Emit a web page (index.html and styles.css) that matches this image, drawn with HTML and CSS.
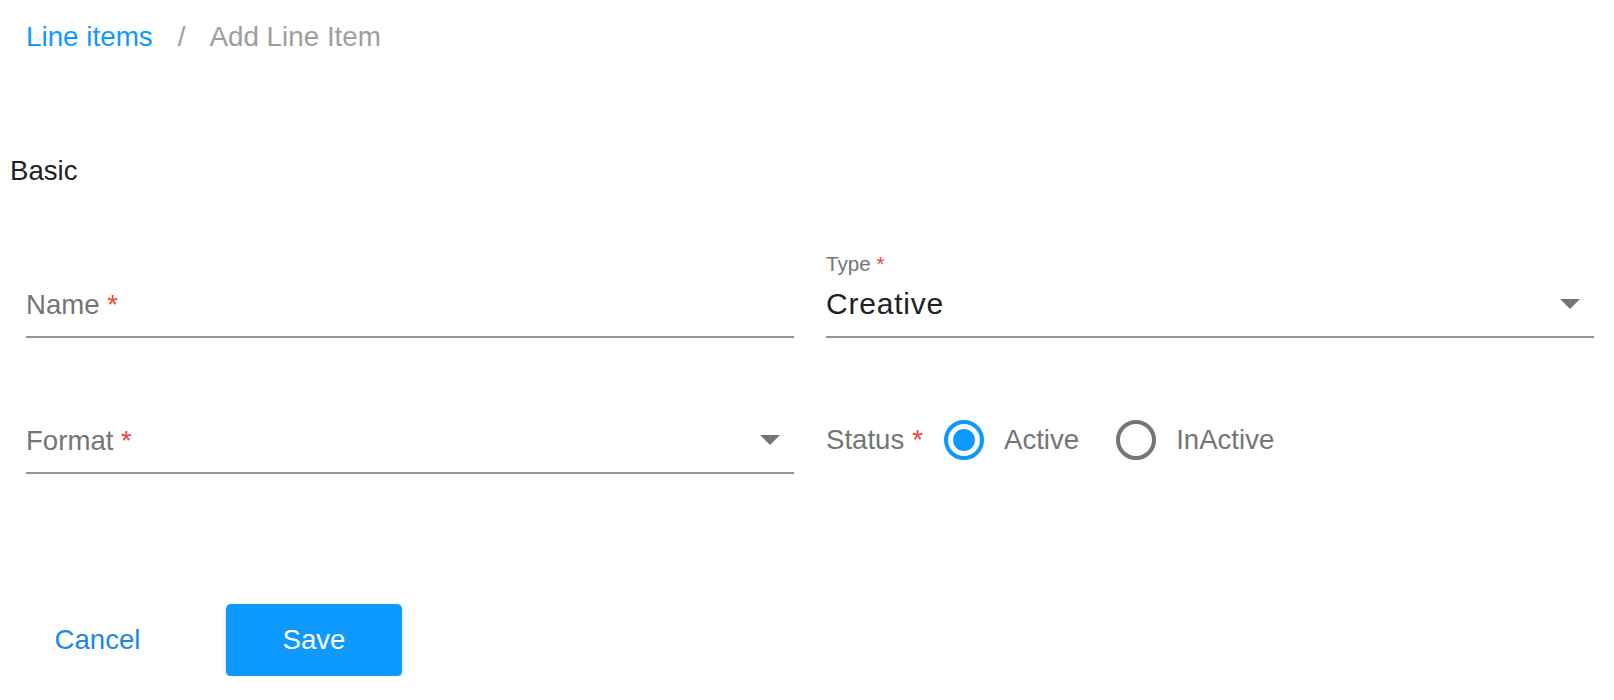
FILE: index.html
```html
<!DOCTYPE html>
<html lang="en">
<head>
<meta charset="utf-8">
<title>Add Line Item</title>
<link rel="stylesheet" href="styles.css">
</head>
<body>
<div class="page">
  <nav class="crumbs">
    <a class="crumb-link" href="#">Line items</a>
    <span class="crumb-sep">/</span>
    <span class="crumb-current">Add Line Item</span>
  </nav>

  <h2 class="section-title">Basic</h2>

  <div class="form-grid">
    <div class="field">
      <div class="field-label"></div>
      <div class="field-input">
        <span class="placeholder">Name <span class="req">*</span></span>
      </div>
      <div class="underline"></div>
    </div>

    <div class="field">
      <div class="field-label">Type <span class="req">*</span></div>
      <div class="field-input select">
        <span class="value">Creative</span>
        <svg class="arrow" width="20" height="10" viewBox="0 0 20 10"><polygon points="0,0 20,0 10,10"/></svg>
      </div>
      <div class="underline"></div>
    </div>

    <div class="field">
      <div class="field-label"></div>
      <div class="field-input select">
        <span class="placeholder">Format <span class="req">*</span></span>
        <svg class="arrow" width="20" height="10" viewBox="0 0 20 10"><polygon points="0,0 20,0 10,10"/></svg>
      </div>
      <div class="underline"></div>
    </div>

    <div class="field">
      <div class="field-label"></div>
      <div class="field-input radio-row">
        <span class="radio-legend">Status<span class="req req-status">*</span></span>
        <label class="radio-option">
          <svg class="radio checked" width="48" height="48" viewBox="0 0 24 24"><circle cx="12" cy="12" r="9" fill="none" stroke-width="2"/><circle class="dot" cx="12" cy="12" r="5"/></svg>
          <span class="radio-text">Active</span>
        </label>
        <label class="radio-option second">
          <svg class="radio" width="48" height="48" viewBox="0 0 24 24"><circle cx="12" cy="12" r="9" fill="none" stroke-width="2"/></svg>
          <span class="radio-text">InActive</span>
        </label>
      </div>
    </div>
  </div>

  <div class="actions">
    <button class="btn-text" type="button">Cancel</button>
    <button class="btn-primary" type="button">Save</button>
  </div>
</div>
</body>
</html>
```

FILE: styles.css
```css
html, body {
  margin: 0;
  padding: 0;
  background: #ffffff;
}

body {
  font-family: "Liberation Sans", Arial, Helvetica, sans-serif;
  color: #212121;
}

.page {
  padding-top: 17px;
}

/* Breadcrumbs */
.crumbs {
  display: flex;
  align-items: center;
  height: 40px;
  line-height: 40px;
  font-size: 27.8px;
  padding-left: 26px;
}

.crumb-link {
  color: #1199fb;
  text-decoration: none;
}

.crumb-sep {
  color: #9e9e9e;
  margin: 0 24px 0 25px;
}

.crumb-current {
  color: #9e9e9e;
}

/* Section title */
.section-title {
  margin: 94px 0 0 0;
  padding-left: 10px;
  height: 40px;
  line-height: 40px;
  font-size: 27.6px;
  font-weight: normal;
  color: #212121;
}

/* Form grid */
.form-grid {
  margin-top: 61px;
  padding: 0 20px 0 26px;
  display: grid;
  grid-template-columns: 1fr 1fr;
  column-gap: 32px;
  row-gap: 50px;
}

.field {
  display: flex;
  flex-direction: column;
}

.field-label {
  height: 24px;
  line-height: 24px;
  font-size: 20.6px;
  color: #757575;
  margin-bottom: 8px;
}

.field-input {
  height: 40px;
  line-height: 40px;
  font-size: 27.6px;
  display: flex;
  align-items: center;
  margin-bottom: 12px;
}

.field-input.select {
  justify-content: space-between;
}

.placeholder {
  color: #757575;
  padding-top: 2px;
}

.value {
  color: #212121;
  font-size: 30px;
  letter-spacing: 0.8px;
}

.req {
  color: #f44336;
}

.arrow {
  fill: #757575;
  margin-right: 14px;
}

.underline {
  height: 2px;
  background: #949494;
}

/* Radio group */
.radio-row {
  color: #757575;
}

.radio-legend {
  display: flex;
  align-items: center;
}

.req-status {
  margin-left: 8px;
}

.radio-option {
  display: flex;
  align-items: center;
  margin-left: 17px;
  height: 40px;
}

.radio-option.second {
  margin-left: 33px;
}

.radio {
  margin: -4px 0;
  flex: none;
}

.radio circle {
  stroke: #757575;
}

.radio.checked circle {
  stroke: #0d99ff;
}

.radio .dot {
  fill: #0d99ff;
  stroke: none;
}

.radio-text {
  margin-left: 16px;
}

/* Actions */
.actions {
  margin-top: 130px;
  padding-left: 26px;
  display: flex;
  align-items: center;
}

.btn-text,
.btn-primary {
  font-family: "Liberation Sans", Arial, Helvetica, sans-serif;
  font-size: 27.6px;
  height: 72px;
  border: none;
  cursor: pointer;
  padding: 0;
}

.btn-text {
  width: 143px;
  background: transparent;
  color: #1a88e6;
}

.btn-primary {
  width: 176px;
  margin-left: 57px;
  background: #0d99ff;
  color: #ffffff;
  border-radius: 5px;
  box-shadow: 0 3px 1px -2px rgba(0,0,0,0.2), 0 2px 2px 0 rgba(0,0,0,0.14), 0 1px 5px 0 rgba(0,0,0,0.12);
}
```
